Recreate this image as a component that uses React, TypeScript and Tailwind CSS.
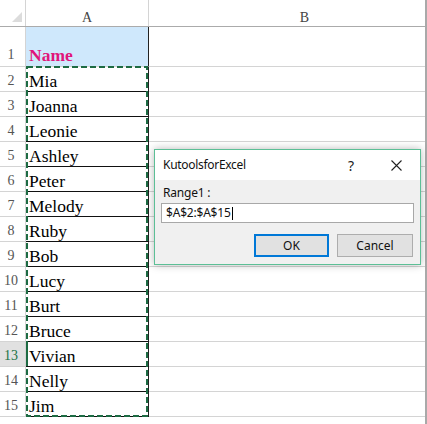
import React from 'react';

const names = [
  'Mia', 'Joanna', 'Leonie', 'Ashley', 'Peter', 'Melody', 'Ruby',
  'Bob', 'Lucy', 'Burt', 'Bruce', 'Vivian', 'Nelly', 'Jim',
];

const serif = { fontFamily: '"Liberation Serif", "Times New Roman", serif' };
const ui = { fontFamily: '"Noto Sans", "Liberation Sans", sans-serif' };

function KutoolsDialog() {
  return (
    <div
      className="absolute left-[154px] top-[149px] w-[267px] h-[116px] border border-[#5cbf96] bg-[#f0f0f0] shadow-[0_0_8px_rgba(0,0,0,0.28)] flex flex-col"
      style={ui}
    >
      {/* title bar */}
      <div className="h-[30px] bg-white flex items-center pl-[8px] text-[12px] text-[#111] tracking-[-0.3px]">
        <span className="flex-1">KutoolsforExcel</span>
        <span className="w-[14px] text-center text-[14px] text-[#222] mr-[33px]">?</span>
        <svg className="w-[11px] h-[11px] mr-[18px]" viewBox="0 0 11 11">
          <path d="M0.5 0.5L10.5 10.5M10.5 0.5L0.5 10.5" stroke="#222" strokeWidth={1.1} fill="none" />
        </svg>
      </div>

      {/* body */}
      <div className="flex-1 flex flex-col px-[6px]">
        <div className="h-[23px] flex items-center pl-[2px] pt-[2px] text-[12px] text-[#111] tracking-[-0.2px]">
          Range1 :
        </div>
        <div className="h-[20px] bg-white border border-[#a8a8a8] flex items-center pl-[4px] text-[12px] text-[#111] tracking-[-0.2px]">
          $A$2:$A$15
          <span className="ml-[1px] w-px h-[13px] bg-black" />
        </div>
        <div className="flex justify-end gap-[8px] mt-[11px] pr-px">
          <button className="w-[75px] h-[23px] bg-[#e1e1e1] border-2 border-[#0078d7] text-[12px] text-[#111]">
            OK
          </button>
          <button className="w-[76px] h-[23px] bg-[#e1e1e1] border border-[#adadad] text-[12px] text-[#111]">
            Cancel
          </button>
        </div>
      </div>
    </div>
  );
}

function RowHeader({ n, active }: { n: number; active?: boolean }) {
  return (
    <div
      className={`w-[26px] shrink-0 border-r border-b border-[#d4d4d4] flex items-end justify-center pr-[3px] text-[14px] leading-[20px] ${
        active ? 'bg-[#e1e1e1] text-[#217346]' : 'text-[#555]'
      }`}
    >
      {n}
    </div>
  );
}

export default function App() {
  return (
    <div className="relative w-[427px] h-[424px] bg-white overflow-hidden" style={serif}>
      <div className="flex">
        <div className="w-[425px]">
          {/* column headers */}
          <div className="flex h-[27px] border-b border-[#ababab]">
            <div className="w-[26px] shrink-0 border-r border-[#d4d4d4] flex items-end justify-end pr-[3px] pb-[4px]">
              <svg width="10" height="10" viewBox="0 0 10 10">
                <polygon points="10,0 10,10 0,10" fill="#dcdcdc" />
              </svg>
            </div>
            <div className="w-[123px] shrink-0 border-r border-[#d4d4d4] flex items-end justify-center text-[14px] leading-[14px] text-[#444] pb-[1px]">
              A
            </div>
            <div className="flex-1 flex items-end justify-center pl-[35px] text-[14px] leading-[14px] text-[#444] pb-[1px]">
              B
            </div>
          </div>

          {/* row 1 */}
          <div className="flex h-[40px]">
            <div className="w-[26px] shrink-0 border-r border-b border-[#d4d4d4] flex items-end justify-center pr-[3px] pb-[1px] text-[14px] leading-[20px] text-[#555]">
              1
            </div>
            <div className="w-[123px] shrink-0 bg-[#cfe8fc] border-r border-[#222] border-b border-b-[#d4d4d4] flex items-end pl-[3px] pb-[1px] text-[17.5px] leading-[20px] font-bold text-[#e0157a]">
              Name
            </div>
            <div className="flex-1 border-b border-[#d4d4d4]" />
          </div>

          {/* data rows */}
          {names.map((name, i) => (
            <div key={name} className="flex h-[25px]">
              <RowHeader n={i + 2} active={i + 2 === 13} />
              <div className="w-[123px] shrink-0 border-r border-[#222] border-b border-b-[#111] flex items-end pl-[3px] text-[17.5px] leading-[20px] text-black">
                {name}
              </div>
              <div className="flex-1 border-b border-[#d4d4d4]" />
            </div>
          ))}
        </div>
        <div className="w-[2px] h-[424px] bg-[#a9a9a9]" />
      </div>

      {/* bottom edge */}
      <div className="h-px bg-[#f0f0f0]" />
      <div className="h-[3px] bg-[#a3a3a3]" />
      <div className="h-[3px] bg-[#d6d6d6]" />

      {/* copy marquee around A2:A15 */}
      <svg className="absolute left-[26px] top-[66px]" width="123" height="351" viewBox="0 0 123 351">
        <rect x="1" y="1" width="120" height="349" fill="none" stroke="#1d6b43" strokeWidth={2} strokeDasharray="6 3" />
        <line x1="1" y1="275" x2="1" y2="300" stroke="#1d6b43" strokeWidth={2} />
      </svg>

      <KutoolsDialog />
    </div>
  );
}
